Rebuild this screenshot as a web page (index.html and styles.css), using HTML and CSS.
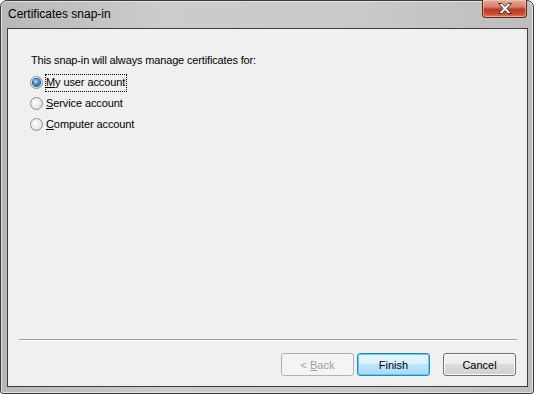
FILE: index.html
```html
<!DOCTYPE html>
<html>
<head>
<meta charset="utf-8">
<link rel="stylesheet" href="styles.css">
</head>
<body>
<div class="window">
  <div class="titlebar">
    <span class="title">Certificates snap-in</span>
    <div class="close">
      <svg width="16" height="11" viewBox="0 0 16 11"><path d="M1.5 0.5h3.5l3 3 3-3h3.5l-4.5 5 4.5 5h-3.5l-3-3-3 3h-3.5l4.5-5z" fill="#fff" stroke="#3a3a3a" stroke-width="1" stroke-linejoin="round"/></svg>
    </div>
  </div>
  <div class="client">
    <div class="body">
      <p class="intro">This snap-in will always manage certificates for:</p>
      <div class="options">
        <label class="opt"><span class="radio checked"><span class="dot"></span></span><span class="lbl focus"><u>M</u>y user account</span></label>
        <label class="opt"><span class="radio"></span><span class="lbl"><u>S</u>ervice account</span></label>
        <label class="opt"><span class="radio"></span><span class="lbl"><u>C</u>omputer account</span></label>
      </div>
    </div>
    <div class="sep"></div>
    <div class="buttons">
      <div class="btn disabled">&lt;&nbsp;<u>B</u>ack</div>
      <div class="btn default">Finish</div>
      <div class="btn cancel">Cancel</div>
    </div>
  </div>
</div>
</body>
</html>
```
FILE: styles.css
```css
html, body { margin: 0; padding: 0; }
body { width: 534px; height: 394px; overflow: hidden; background: #fff; }
.window {
  box-sizing: border-box;
  width: 534px; height: 394px;
  border: 1px solid #3c3c3c;
  border-radius: 7px 7px 3px 3px;
  background: linear-gradient(90deg, #b8b8b8 0%, #cccccc 30%, #c9c9c9 70%, #bdbdbd 100%);
  padding: 0 5px 6px 6px;
  display: flex; flex-direction: column;
  box-shadow: inset 0 0 0 1px #e2e2e2;
}
.titlebar {
  height: 27px; flex: none;
  display: flex; align-items: flex-start; justify-content: space-between;
  position: relative;
}
.title {
  font-family: "Liberation Sans", Arial, sans-serif;
  font-size: 12px; color: #000;
  margin: 6px 0 0 1px;
}
.close {
  width: 45px; height: 18px;
  margin: -1px 1px 0 0;
  box-sizing: border-box;
  border: 1px solid #5a2a22;
  border-top: none;
  border-radius: 0 0 4px 4px;
  background: linear-gradient(180deg, #e8aa98 0%, #d9806a 40%, #c2391f 55%, #c94a30 80%, #dc7a5c 100%);
  box-shadow: inset 0 0 0 1px rgba(255,220,200,0.5);
  display: flex; align-items: center; justify-content: center;
}
.close svg { display: block; }
.client {
  flex: 1;
  background: #f0f0f0;
  border: 1px solid #3e3e3e;
  display: flex; flex-direction: column;
  font-family: "Liberation Sans", Arial, sans-serif;
  font-size: 11px; color: #000;
}
.body { flex: 1; padding: 25px 0 0 23px; }
.intro { margin: 0 0 7px 0; line-height: 13px; letter-spacing: -0.15px; }
.options { display: flex; flex-direction: column; gap: 4px; margin-left: -1px; }
.opt { display: flex; align-items: center; height: 17px; }
.radio {
  box-sizing: border-box;
  width: 13px; height: 13px; border-radius: 50%;
  border: 1px solid #8e8f8f;
  background: radial-gradient(circle at 40% 40%, #ffffff 0%, #e6e6e6 60%, #c8c8c8 100%);
  margin-right: 2px;
  display: flex; align-items: center; justify-content: center;
}
.dot {
  width: 7px; height: 7px; border-radius: 50%;
  background: radial-gradient(circle at 40% 35%, #bfe4ff 0%, #3a8bd0 45%, #1b4f8a 100%);
  box-shadow: 0 0 0 1px #1f4e7a;
}
.lbl { padding: 1px 1px 2px 0; border: 1px dotted transparent; line-height: 13px; letter-spacing: -0.1px; }
.lbl.focus { border-color: #000; }
.sep {
  height: 0;
  border-top: 1px solid #a0a0a0;
  border-bottom: 1px solid #ffffff;
  margin: 0 10px 0 11px;
}
.buttons {
  height: 45px;
  display: flex; justify-content: flex-end; align-items: flex-start;
  padding: 12px 11px 0 0;
  box-sizing: border-box;
}
.btn {
  box-sizing: border-box;
  width: 73px; height: 23px;
  border: 1px solid #707070;
  border-radius: 3px;
  background: linear-gradient(180deg, #f2f2f2 0%, #ebebeb 49%, #dddddd 50%, #cfcfcf 100%);
  box-shadow: inset 0 0 0 1px #fcfcfc;
  display: flex; align-items: center; justify-content: center;
  font-size: 11px;
}
.btn.disabled { color: #a0a0a0; border-color: #adb2b5; background: #f4f4f4; box-shadow: none; }
.btn.default {
  margin-left: 3px;
  border-color: #3c7fb1;
  background: linear-gradient(180deg, #eaf6fd 0%, #d9f0fc 49%, #bee6fd 50%, #a7d9f5 100%);
  box-shadow: inset 0 0 0 1px #48d8fb;
}
.btn.cancel { margin-left: 13px; }
u { text-decoration: underline; text-underline-offset: 1px; }
```
